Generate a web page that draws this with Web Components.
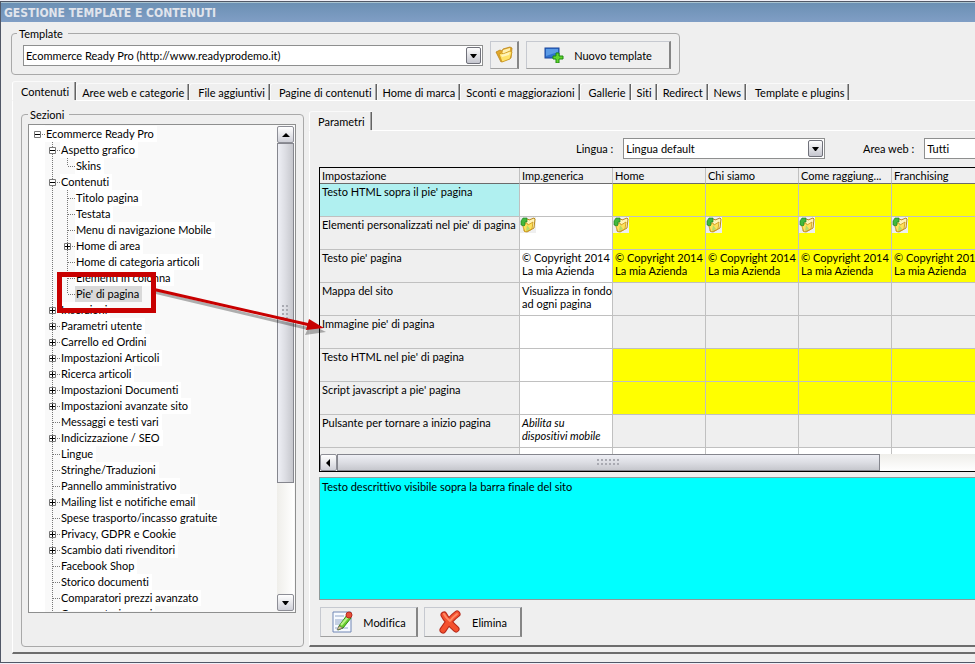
<!DOCTYPE html>
<html lang="it">
<head>
<meta charset="utf-8">
<title>Gestione template e contenuti</title>
<style>
    body {
        margin: 0;
        background: #f0f0f8;
        color: #000;
        font: 11px/13px Lato, "Liberation Sans", sans-serif;
        font-variant-ligatures: none;
    }
</style>
</head>
<body>
<template-manager></template-manager>

<script>
const icons = {
    folder: `<svg width="18" height="18" viewBox="0 0 18 18">
        <path d="M1 6l4-2 2 1 1-2 7-2 2 1-1 10-10 4z" fill="#e3a92c" stroke="#b98416" stroke-width=".8"/>
        <path d="M8 4l7-2v4l-8 3z" fill="#fff0b0"/>
        <path d="M4 8l3-1 1 1 7-3 2 1-2 7-8 3z" fill="#ffe36a" stroke="#c8921c" stroke-width=".8"/>
        <path d="M6 9l9-3-1 3-7 2z" fill="#fff4bc"/></svg>`,
    screen: `<svg width="20" height="16" viewBox="0 0 20 16">
        <rect x="1" y="1" width="14" height="10" fill="#2f72cf" stroke="#1b459b"/>
        <path d="M2 2h12v3L2 9z" fill="#5b9be6"/>
        <path d="M12 6h3v3h4v3h-4v4h-3v-4H9V9h3z" fill="#62d62c" stroke="#1f8a12"/></svg>`,
    edit: `<svg width="22" height="24" viewBox="0 0 22 24">
        <path d="M2 2h18v20H2z" fill="#f7faff" stroke="#7187b5"/>
        <path d="M4 5h9v2H4zM4 9h8v6H4zM4 17h13v2H4z" fill="#c4d0e4"/>
        <path d="M8 16l8-11 4 3-8 10-5 2z" fill="#68cf2e" stroke="#318816"/>
        <path d="M10 15l7-8" stroke="#baf28a" stroke-width="2"/>
        <path d="M8 16l-2 4 6-2z" fill="#e8cf9a" stroke="#555" stroke-width=".6"/>
        <circle cx="18" cy="5" r="3" fill="#e8503a" stroke="#b52a1d"/></svg>`,
    cross: `<svg width="24" height="24" viewBox="0 0 24 24" fill="none" stroke-linecap="round" stroke-linejoin="round">
        <path d="M6 5q3 6 12 14M19 4q-7 5-14 16" stroke="#b5281a" stroke-width="7"/>
        <path d="M6 5q3 6 12 14M19 4q-7 5-14 16" stroke="#f4512f" stroke-width="5"/>
        <path d="M6 4q2 4 6 7 3-4 7-7" stroke="#ff8a66" stroke-width="2"/></svg>`,
    cell: `<svg width="16" height="16" viewBox="0 0 16 16">
        <path d="M0 0h16v16H0z" fill="#efefef"/>
        <path d="M5 3l3-1 1 1 5-2 1 1-1 9-7 4-3-1z" fill="#fff3b8" stroke="#b98a1a"/>
        <path d="M2 7l5-1 1 2 5-3-1 7-7 3z" fill="#ffe25a" stroke="#c9951c" stroke-width=".8"/>
        <path d="M7 8l3 4-4 2z" fill="#b6dc6a"/>
        <path d="M1 7V4l2-3h4v4H5v3l-1 1-3-1z" fill="#43b83c" stroke="#137a1a" stroke-width=".6"/></svg>`
};

const arrows = {
    up: 'M0 4l4-4 4 4z',
    down: 'M0 0h7l-3 4h-1z',
    left: 'M4 0v8L0 4z'
};

// Small grey push button used by scrollbars
const arrowButton = (dir, label) => `
    <button class="arrow" aria-label="${label}">
        <svg width="8" height="8" viewBox="${dir === 'left' ? '-1 0 8 8' : '0 -2 8 8'}"><path d="${arrows[dir]}"/></svg>
    </button>`;

class GroupBox extends HTMLElement {
    constructor() {
        super();
        this.attachShadow({ mode: 'open' });
    }

    connectedCallback() {
        this.shadowRoot.innerHTML = `
            <style>
                :host { display: flex; min-width: 0; }
                fieldset {
                    display: flex;
                    flex: 1;
                    min-width: 0;
                    margin: 0;
                    padding: var(--group-padding, 1px 8px 5px 11px);
                    border: 1px solid #a9a9a9;
                    border-radius: 4px;
                }
                legend { padding: 0 5px 0 2px; margin-left: var(--legend-indent, -6px); }
                .body { display: flex; flex: 1; min-width: 0; gap: 7px; align-items: var(--group-align, center); }
            </style>
            <fieldset>
                <legend>${this.getAttribute('label')}</legend>
                <div class="body"><slot></slot></div>
            </fieldset>
        `;
    }
}

class ComboBox extends HTMLElement {
    constructor() {
        super();
        this.attachShadow({ mode: 'open' });
    }

    connectedCallback() {
        const label = this.getAttribute('label');
        const caption = this.hasAttribute('caption') ? `<label for="field">${label} :</label>` : '';
        this.shadowRoot.innerHTML = `
            <style>
                :host { display: flex; align-items: center; gap: 10px; min-width: 0; }
                .box { display: grid; flex: 1; min-width: 0; align-items: center; }
                label { white-space: nowrap; }
                select {
                    grid-area: 1 / 1;
                    appearance: none;
                    width: 100%;
                    height: 21px;
                    margin: 0;
                    padding: 0 20px 0 2px;
                    border: 1px solid #8e8f8f;
                    border-radius: 0;
                    background: #fff;
                    color: #000;
                    font: inherit;
                }
                svg {
                    grid-area: 1 / 1;
                    justify-self: end;
                    margin-right: 2px;
                    pointer-events: none;
                }
            </style>
            ${caption}
            <div class="box">
                <select id="field" aria-label="${label}"><option>${this.getAttribute('value')}</option></select>
                <svg width="15" height="17" viewBox="0 0 15 17">
                    <defs><linearGradient id="g" x2="0" y2="1">
                        <stop stop-color="#fff"/><stop offset="1" stop-color="#c3c4cd"/>
                    </linearGradient></defs>
                    <rect x=".5" y=".5" width="14" height="16" rx="1.5" fill="url(#g)" stroke="#70717a"/>
                    <path d="M4 7h7l-3 4h-1z"/>
                </svg>
            </div>
        `;
    }
}

class PushButton extends HTMLElement {
    constructor() {
        super();
        this.attachShadow({ mode: 'open' });
    }

    connectedCallback() {
        const label = this.getAttribute('label');
        this.shadowRoot.innerHTML = `
            <style>
                :host { display: block; }
                button {
                    display: flex;
                    align-items: center;
                    justify-content: center;
                    gap: 10px;
                    width: 100%;
                    height: var(--button-height, 28px);
                    padding: 0;
                    border: 1px solid #c6c9d0;
                    border-right: 2px solid #858585;
                    border-bottom-color: #a0a0a0;
                    background: #efefef;
                    color: #000;
                    font: inherit;
                }
                svg { display: block; }
                button:active { border-color: #6d6d6d #c6c9d0 #c6c9d0 #6d6d6d; }
            </style>
            <button aria-label="${label}">${icons[this.getAttribute('icon')]}<slot></slot></button>
        `;
    }
}

class TabStrip extends HTMLElement {
    constructor() {
        super();
        this.attachShadow({ mode: 'open' });
    }

    connectedCallback() {
        // "Name*" marks a tab with extra room before its text
        const tabs = this.getAttribute('tabs').split('|');
        this.shadowRoot.innerHTML = `
            <style>
                :host { display: block; }
                div { display: flex; align-items: flex-end; }
                div::after { content: ""; flex: 1; border-bottom: 1px solid #fff; }
                button {
                    height: 18px;
                    padding: 0 5px 0 5px;
                    border: 0;
                    border-top: 1px solid #fafafa;
                    border-bottom: 1px solid #fff;
                    border-left: 1px solid #fafafa;
                    border-radius: 3px 0 0 0;
                    background: linear-gradient(90deg, #a5a5a5 50%, #636363 50%) right / 2px 100% no-repeat #efefef;
                    color: #000;
                    font: inherit;
                    white-space: nowrap;
                }
                button.roomy { padding-left: 8px; }
                button[aria-selected="true"] {
                    height: 20px;
                    padding: 0 7px 0 8px;
                    border-bottom-color: #efefef;
                    border-left-color: #fff;
                }
            </style>
            <div role="tablist">
                ${tabs.map((name, i) => `<button role="tab" class="${name.endsWith('*') ? 'roomy' : ''}" aria-selected="${i === 0}">${name.replace('*', '')}</button>`).join('')}
            </div>
        `;
    }
}

class ScrollTrack extends HTMLElement {
    constructor() {
        super();
        this.attachShadow({ mode: 'open' });
    }

    connectedCallback() {
        const vertical = this.getAttribute('direction') === 'vertical';
        this.shadowRoot.innerHTML = `
            <style>
                :host {
                    display: flex;
                    flex-direction: ${vertical ? 'column' : 'row'};
                    flex: none;
                    background: linear-gradient(${vertical ? '90deg' : '180deg'}, #efeeea, #fff);
                }
                .arrow {
                    display: flex;
                    flex: none;
                    align-items: center;
                    justify-content: center;
                    width: 17px;
                    height: 17px;
                    padding: 0;
                    border: 1px solid #8d8e96;
                    border-radius: 2px;
                    background: linear-gradient(#fff, #cfd0d8);
                }
                .thumb {
                    box-sizing: border-box;
                    display: flex;
                    align-items: center;
                    justify-content: center;
                    flex: 0 0 ${vertical ? '70%' : '543px'};
                    border: 1px solid #85868e;
                    background: linear-gradient(${vertical ? '90deg' : '180deg'}, #eeeff5, #dcdde3 50%, #c6c7cd);
                }
                .grip {
                    width: ${vertical ? 7 : 23}px;
                    height: ${vertical ? 15 : 7}px;
                    background: radial-gradient(circle at 1px 1px, #a9aab2 1px, transparent 1px) 0 0 / 4px 4px;
                }
                .gap { flex: 1; }
            </style>
            ${vertical ? arrowButton('up', 'Scorri su') : arrowButton('left', 'Scorri a sinistra')}
            <div class="thumb"><div class="grip"></div></div>
            <div class="gap"></div>
            ${vertical ? arrowButton('down', 'Scorri giù') : ''}
        `;
    }
}

// One row of the tree; children are slotted under it
class TreeNode extends HTMLElement {
    constructor() {
        super();
        this.attachShadow({ mode: 'open' });
    }

    connectedCallback() {
        const state = this.getAttribute('state') || 'leaf';
        this.shadowRoot.innerHTML = `
            <style>
                :host {
                    display: block;
                    background: repeating-linear-gradient(#777 0 1px, transparent 1px 2px) 3px 0 / 1px 100% no-repeat;
                }
                :host([last]) { background-size: 1px 8px; }
                :host([root]) { background: none; }
                .row { display: flex; align-items: center; height: 16px; }
                svg { flex: none; }
                .dots {
                    flex: none;
                    width: 4px;
                    height: 1px;
                    background: repeating-linear-gradient(90deg, transparent 0 1px, #777 1px 2px);
                }
                .leaf .dots { width: 8px; margin-left: 3px; }
                .name { padding: 1px 3px 2px 1px; background: #fff; white-space: nowrap; }
                :host([selected]) .name { background: #d9d9d9; }
                .children { padding-left: 15px; }
            </style>
            <div class="row ${state}">
                ${state === 'leaf' ? '' : `<svg width="7" height="7" viewBox="0 0 7 7">
                    <path d="M.5.5h6v6h-6z" fill="#fff" stroke="#777"/>
                    <path d="M1 3h5v1H1z${state === 'closed' ? 'M3 1h1v5H3z' : ''}"/>
                </svg>`}
                <span class="dots"></span>
                <span class="name">${this.getAttribute('name')}</span>
            </div>
            <div class="children"><slot></slot></div>
        `;
    }
}

class SectionTree extends HTMLElement {
    constructor() {
        super();
        this.attachShadow({ mode: 'open' });
    }

    connectedCallback() {
        this.shadowRoot.innerHTML = `
            <style>
                :host { display: flex; flex: 1; min-width: 0; min-height: 0; }
                .frame {
                    display: flex;
                    flex: 1;
                    min-width: 0;
                    border: 1px solid #8e8f8f;
                    padding: 1px;
                    background: linear-gradient(90deg, #fff 16px, #f9f9f9 16px);
                }
                .list { flex: 1; min-width: 0; height: 0; min-height: 100%; overflow: hidden; padding-left: 4px; box-sizing: border-box; }
            </style>
            <div class="frame">
                <div class="list">
                    <tree-node root state="open" name="Ecommerce Ready Pro">
                        <tree-node state="open" name="Aspetto grafico">
                            <tree-node last name="Skins"></tree-node>
                        </tree-node>
                        <tree-node state="open" name="Contenuti">
                            <tree-node name="Titolo pagina"></tree-node>
                            <tree-node name="Testata"></tree-node>
                            <tree-node name="Menu di navigazione Mobile"></tree-node>
                            <tree-node state="closed" name="Home di area"></tree-node>
                            <tree-node name="Home di categoria articoli"></tree-node>
                            <tree-node name="Elementi in colonna"></tree-node>
                            <tree-node last selected name="Pie' di pagina"></tree-node>
                        </tree-node>
                        <tree-node state="closed" name="Inserzioni"></tree-node>
                        <tree-node state="closed" name="Parametri utente"></tree-node>
                        <tree-node state="closed" name="Carrello ed Ordini"></tree-node>
                        <tree-node state="closed" name="Impostazioni Articoli"></tree-node>
                        <tree-node state="closed" name="Ricerca articoli"></tree-node>
                        <tree-node state="closed" name="Impostazioni Documenti"></tree-node>
                        <tree-node state="closed" name="Impostazioni avanzate sito"></tree-node>
                        <tree-node name="Messaggi e testi vari"></tree-node>
                        <tree-node state="closed" name="Indicizzazione / SEO"></tree-node>
                        <tree-node name="Lingue"></tree-node>
                        <tree-node name="Stringhe/Traduzioni"></tree-node>
                        <tree-node name="Pannello amministrativo"></tree-node>
                        <tree-node state="closed" name="Mailing list e notifiche email"></tree-node>
                        <tree-node name="Spese trasporto/incasso gratuite"></tree-node>
                        <tree-node state="closed" name="Privacy, GDPR e Cookie"></tree-node>
                        <tree-node state="closed" name="Scambio dati rivenditori"></tree-node>
                        <tree-node name="Facebook Shop"></tree-node>
                        <tree-node name="Storico documenti"></tree-node>
                        <tree-node name="Comparatori prezzi avanzato"></tree-node>
                        <tree-node name="Comparatori prezzi"></tree-node>
                    </tree-node>
                </div>
                <scroll-track direction="vertical"></scroll-track>
            </div>
        `;
    }
}

class SettingsGrid extends HTMLElement {
    constructor() {
        super();
        this.attachShadow({ mode: 'open' });
    }

    connectedCallback() {
        const columns = ['Imp.generica', 'Home', 'Chi siamo', 'Come raggiung...', 'Franchising'];
        const copyright = '© Copyright 2014<br>La mia Azienda';
        // [setting, generic value, value in each area, areas editable]
        const rows = [
            ["Testo HTML sopra il pie' pagina", '', '', true],
            ["Elementi personalizzati nel pie' di pagina", icons.cell, icons.cell, true],
            ["Testo pie' pagina", copyright, copyright, true],
            ['Mappa del sito', 'Visualizza in fondo<br>ad ogni pagina', '', false],
            ["Immagine pie' di pagina", '', '', false],
            ["Testo HTML nel pie' di pagina", '', '', true],
            ["Script javascript a pie' pagina", '', '', true],
            ['Pulsante per tornare a inizio pagina', '<i>Abilita su<br>dispositivi mobile</i>', '', false]
        ];
        const areas = columns.slice(1);

        this.shadowRoot.innerHTML = `
            <style>
                :host { display: block; border: 1px solid #000; border-right: 0; background: #fff; overflow: hidden; }
                .view { height: 286px; overflow: hidden; }
                table { border-collapse: separate; border-spacing: 0; table-layout: fixed; width: 665px; }
                col { width: 93px; }
                col.first { width: 200px; }
                th, td {
                    box-sizing: border-box;
                    padding: 1px 0 0 2px;
                    border-right: 1px solid #c0c0c0;
                    border-bottom: 1px solid #c0c0c0;
                    font-weight: normal;
                    text-align: left;
                    vertical-align: top;
                    white-space: nowrap;
                    overflow: hidden;
                }
                thead th { height: 16px; border-bottom-color: #6b6b6b; background: #efefef; }
                tbody th { height: 33px; background: #efefef; }
                tbody tr:first-child th { background: #b0f0f0; }
                td.off { background: #efefef; }
                td.on { background: #ff0; }
                td.icon { padding: 0; }
                td svg { display: block; }
            </style>
            <div class="view">
                <table>
                    <colgroup><col class="first">${columns.map(() => '<col>').join('')}</colgroup>
                    <thead>
                        <tr><th>Impostazione</th>${columns.map(name => `<th>${name}</th>`).join('')}</tr>
                    </thead>
                    <tbody>
                        ${rows.map(([name, value, each, on]) => {
                            const icon = value.startsWith('<svg') ? 'icon' : '';
                            return `<tr><th>${name}</th><td class="${icon}">${value}</td>${areas.map(() => `<td class="${on ? 'on' : 'off'} ${icon}">${each}</td>`).join('')}</tr>`;
                        }).join('')}
                        <tr><th></th>${columns.map(() => '<td></td>').join('')}</tr>
                    </tbody>
                </table>
            </div>
            <scroll-track direction="horizontal"></scroll-track>
        `;
    }
}

class TemplateManager extends HTMLElement {
    constructor() {
        super();
        this.attachShadow({ mode: 'open' });
    }

    connectedCallback() {
        this.shadowRoot.innerHTML = `
            <style>
                :host {
                    position: relative;
                    display: flex;
                    flex-direction: column;
                    box-sizing: border-box;
                    height: 100vh;
                    padding: 1px 0;
                    overflow: hidden;
                }
                .window {
                    display: flex;
                    flex-direction: column;
                    flex: 1;
                    min-height: 0;
                    border: 1px solid #515867;
                    border-right: 0;
                    background: #efefef;
                }
                h1 {
                    margin: 0 0 5px;
                    padding: 4px 3px 3px;
                    border-top: 1px solid #a9c3d0;
                    background: linear-gradient(#6b90b4, #809ec5);
                    color: #e0e4ec;
                    font: bold 12px/12px "DejaVu Sans Condensed", sans-serif;
                }
                .template { width: 669px; margin-left: 10px; }
                .template combo-box { flex: 1; }
                .small { width: 29px; }
                .wide { width: 145px; }
                .main-tabs { margin: 6px 0 0 11px; }
                .panel {
                    display: flex;
                    flex: 1;
                    min-height: 0;
                    gap: 5px;
                    margin: 0 0 8px 11px;
                    padding: 7px 0 5px 8px;
                    border-left: 1px solid #fff;
                    border-bottom: 2px solid #6d6d6d;
                }
                .sections {
                    flex: 0 0 283px;
                    --group-padding: 3px 7px 33px 6px;
                    --group-align: stretch;
                    --legend-indent: 0px;
                }
                .detail { display: flex; flex: 1; flex-direction: column; min-width: 0; padding-top: 3px; }
                .params {
                    display: flex;
                    flex: 1;
                    flex-direction: column;
                    min-height: 0;
                    padding: 7px 0 8px 9px;
                    border-left: 1px solid #fff;
                    border-bottom: 2px solid #6d6d6d;
                }
                /* the area list runs on past the right edge, like the grid */
                .filters { display: flex; gap: 38px; margin-bottom: 8px; padding-left: 257px; overflow: hidden; }
                .language { flex: 0 0 249px; }
                .area { flex: 0 0 253px; }
                .hint { flex: 1; margin: 5px 0 7px; padding: 2px; border: 1px solid #8e9a9a; border-right: 0; background: #0ff; }
                .actions { display: flex; gap: 6px; padding-left: 1px; --button-height: 30px; }
                .actions push-button { width: 98px; }
                .callout { position: absolute; left: 0; top: 0; pointer-events: none; }
            </style>
            <div class="window">
                <h1>GESTIONE TEMPLATE E CONTENUTI</h1>
                <group-box class="template" label="Template">
                    <combo-box label="Template" value="Ecommerce Ready Pro (http://www.readyprodemo.it)"></combo-box>
                    <push-button class="small" icon="folder" label="Apri cartella"></push-button>
                    <push-button class="wide" icon="screen" label="Nuovo template">Nuovo template</push-button>
                </group-box>
                <tab-strip class="main-tabs" tabs="Contenuti|Aree web e categorie|File aggiuntivi*|Pagine di contenuti*|Home di marca|Sconti e maggiorazioni|Gallerie*|Siti|Redirect|News|Template e plugins*"></tab-strip>
                <div class="panel">
                    <group-box class="sections" label="Sezioni"><section-tree></section-tree></group-box>
                    <div class="detail">
                        <tab-strip tabs="Parametri"></tab-strip>
                        <div class="params">
                            <div class="filters">
                                <combo-box class="language" caption label="Lingua" value="Lingua default"></combo-box>
                                <combo-box class="area" caption label="Area web" value="Tutti"></combo-box>
                            </div>
                            <settings-grid></settings-grid>
                            <p class="hint">Testo descrittivo visibile sopra la barra finale del sito</p>
                            <div class="actions">
                                <push-button icon="edit" label="Modifica">Modifica</push-button>
                                <push-button icon="cross" label="Elimina">Elimina</push-button>
                            </div>
                        </div>
                    </div>
                </div>
            </div>
            <svg class="callout" width="340" height="340" viewBox="0 0 340 340">
                <g fill="none" stroke="#000" opacity=".3"><path d="M154 292l156 37" stroke-width="3"/><path d="M310 324l16 8-21 3z" fill="#000" stroke="none"/></g>
                <path d="M59.5 274.5h94v36h-94z" fill="none" stroke="#c80000" stroke-width="5"/>
                <path d="M152 289l158 36" stroke="#c80000" stroke-width="3"/>
                <path d="M309 319l15 9-18 2z" fill="#c80000"/>
            </svg>
        `;
    }
}

customElements.define('group-box', GroupBox);
customElements.define('combo-box', ComboBox);
customElements.define('push-button', PushButton);
customElements.define('tab-strip', TabStrip);
customElements.define('scroll-track', ScrollTrack);
customElements.define('tree-node', TreeNode);
customElements.define('section-tree', SectionTree);
customElements.define('settings-grid', SettingsGrid);
customElements.define('template-manager', TemplateManager);
</script>
</body>
</html>
